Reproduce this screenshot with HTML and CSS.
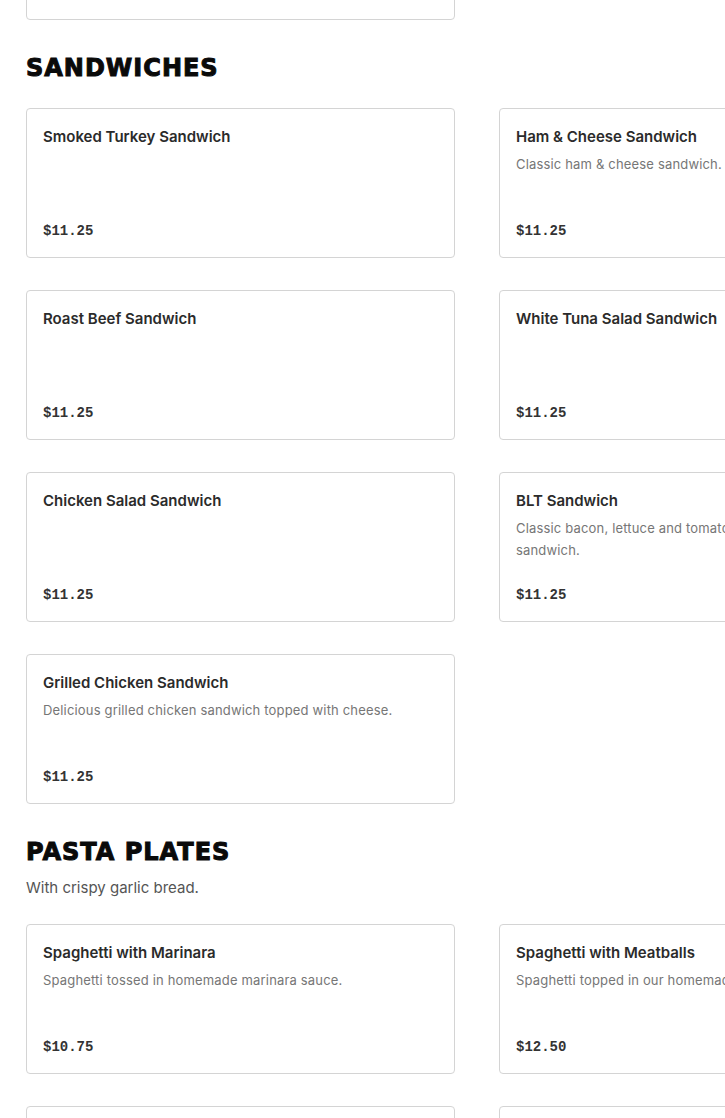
FILE: index.html
```html
<!DOCTYPE html>
<html lang="en">
<head>
<meta charset="utf-8">
<title>Menu</title>
<link rel="stylesheet" href="styles.css">
</head>
<body>
<main class="menu">
  <section class="section section-prev">
    <div class="grid">
      <div class="card"></div>
    </div>
  </section>

  <section class="section">
    <h2 class="section-title">SANDWICHES</h2>
    <div class="grid">
      <div class="card">
        <div class="card-body">
          <h3 class="item-name">Smoked Turkey Sandwich</h3>
          <p class="item-price">$11.25</p>
        </div>
      </div>
      <div class="card">
        <div class="card-body">
          <h3 class="item-name">Ham &amp; Cheese Sandwich</h3>
          <p class="item-desc">Classic ham &amp; cheese sandwich.</p>
          <p class="item-price">$11.25</p>
        </div>
      </div>
      <div class="card">
        <div class="card-body">
          <h3 class="item-name">Roast Beef Sandwich</h3>
          <p class="item-price">$11.25</p>
        </div>
      </div>
      <div class="card">
        <div class="card-body">
          <h3 class="item-name">White Tuna Salad Sandwich</h3>
          <p class="item-price">$11.25</p>
        </div>
      </div>
      <div class="card">
        <div class="card-body">
          <h3 class="item-name">Chicken Salad Sandwich</h3>
          <p class="item-price">$11.25</p>
        </div>
      </div>
      <div class="card">
        <div class="card-body">
          <h3 class="item-name">BLT Sandwich</h3>
          <p class="item-desc">Classic bacon, lettuce and tomato sandwich.</p>
          <p class="item-price">$11.25</p>
        </div>
        <div class="thumb"></div>
      </div>
      <div class="card">
        <div class="card-body">
          <h3 class="item-name">Grilled Chicken Sandwich</h3>
          <p class="item-desc">Delicious grilled chicken sandwich topped with cheese.</p>
          <p class="item-price">$11.25</p>
        </div>
      </div>
    </div>
  </section>

  <section class="section">
    <h2 class="section-title">PASTA PLATES</h2>
    <p class="section-sub">With crispy garlic bread.</p>
    <div class="grid">
      <div class="card">
        <div class="card-body">
          <h3 class="item-name">Spaghetti with Marinara</h3>
          <p class="item-desc">Spaghetti tossed in homemade marinara sauce.</p>
          <p class="item-price">$10.75</p>
        </div>
      </div>
      <div class="card">
        <div class="card-body">
          <h3 class="item-name">Spaghetti with Meatballs</h3>
          <p class="item-desc">Spaghetti topped in our homemade meatballs.</p>
          <p class="item-price">$12.50</p>
        </div>
      </div>
      <div class="card">
        <div class="card-body">
          <h3 class="item-name">Spaghetti with Sausage</h3>
          <p class="item-price">$12.50</p>
        </div>
      </div>
      <div class="card">
        <div class="card-body">
          <h3 class="item-name">Baked Ziti</h3>
          <p class="item-price">$12.50</p>
        </div>
      </div>
    </div>
  </section>
</main>
</body>
</html>
```

FILE: styles.css
```css
html, body {
  margin: 0;
  padding: 0;
  background: #ffffff;
}

body {
  font-family: Inter, "Liberation Sans", Arial, sans-serif;
  color: #2b2b2b;
  overflow: hidden;
}

.menu {
  padding-left: 26px;
  width: 902px;
}

.section {
  padding-top: 30px;
}

.section-prev {
  padding-top: 0;
  margin-top: -130px;
}

.section-title {
  margin: 0;
  font-family: "DejaVu Sans", "Liberation Sans", sans-serif;
  font-weight: 700;
  font-size: 24px;
  line-height: 34px;
  letter-spacing: 1px;
  -webkit-text-stroke: 1px #0a0a0a;
  color: #0a0a0a;
  padding-top: 1px;
  margin-bottom: -1px;
}

.section-sub {
  margin: 8px 0 0;
  font-size: 15px;
  line-height: 24px;
  color: #555555;
}

.grid {
  display: grid;
  grid-template-columns: 429px 429px;
  gap: 32px 44px;
  margin-top: 24px;
}

.section-prev .grid {
  margin-top: 0;
}

.card {
  box-sizing: border-box;
  min-height: 150px;
  border: 1px solid #d4d4d4;
  border-radius: 4px;
  display: flex;
  background: #fff;
}

.card-body {
  flex: 1;
  display: flex;
  flex-direction: column;
  padding: 16px;
}

.thumb {
  width: 130px;
  flex: none;
}

.item-name {
  margin: 0;
  font-size: 15px;
  line-height: 24px;
  font-weight: 600;
  color: #2b2b2b;
}

.item-desc {
  margin: 4px 0 0;
  font-size: 13px;
  line-height: 22px;
  letter-spacing: 0.17px;
  color: #767676;
}

.item-price {
  margin: auto 0 0;
  padding-top: 23px;
  font-family: "Liberation Mono", "DejaVu Sans Mono", monospace;
  font-weight: 700;
  font-size: 14px;
  line-height: 20px;
  color: #333333;
}
```
